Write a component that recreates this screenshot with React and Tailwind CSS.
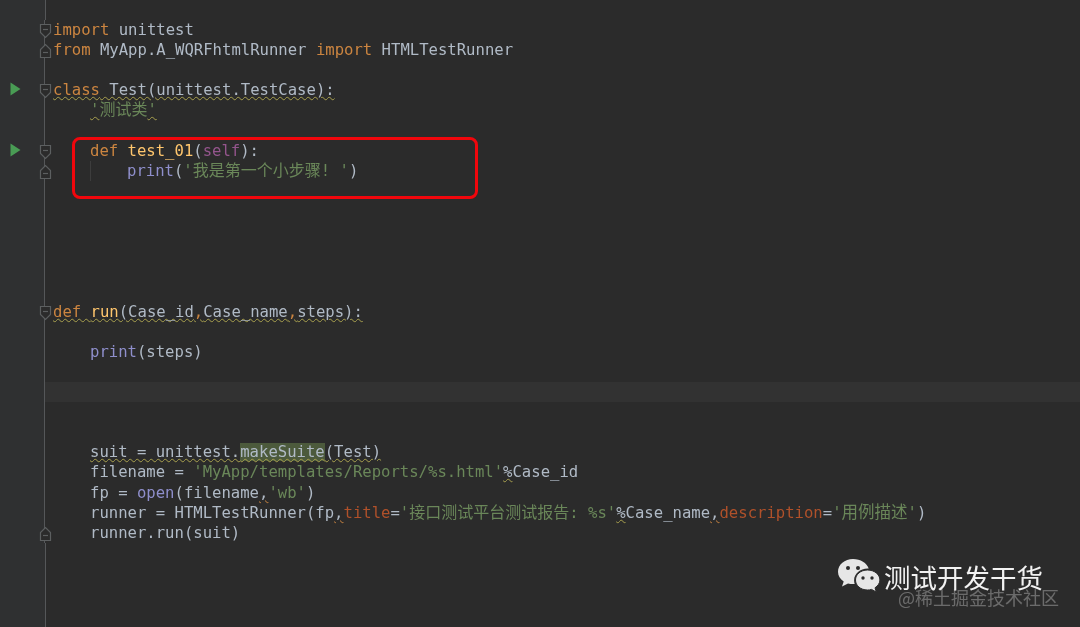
const kw = "text-[#cc8540]";
const fn = "text-[#ffc66d]";
const bi = "text-[#8f8fcc]";
const str = "text-[#6a8759]";
const arg = "text-[#b0512a]";
const wavy = "underline decoration-wavy decoration-[#a8a04e] decoration-1 underline-offset-1";
const warn = "underline decoration-wavy decoration-[#cc8540] decoration-1 underline-offset-1";

function FoldIcon({ up }) {
  return (
    <svg width="13" height="16" viewBox="0 0 13 16" fill="#2b2b2b" stroke="#5c5f60" strokeWidth="1.2" className="absolute left-[39px] top-[3px]">
      {up ? <path d="M1.500 14.500V6.500L6.500 1.500L11.500 6.500V14.500Z" /> : <path d="M1.500 1.500H11.500V9.500L6.500 14.500L1.500 9.500Z" />}
      <path d={up ? "M4 9.500H9" : "M4 6.500H9"} />
    </svg>
  );
}

function RunIcon() {
  return (
    <svg width="11" height="14" viewBox="0 0 11 14" className="absolute left-[10px] top-[2px]">
      <path d="M0.500 0.500L10.500 7L0.500 13.500Z" fill="#499c54" />
    </svg>
  );
}

// CJK runs are a touch wider than the mono size in the editor
function Cjk({ children }) {
  return <span className="text-[16px]">{children}</span>;
}

function Row({ children, run, fold, active, indent = "" }) {
  return (
    <div className={`flex h-[20.12px] ${active ? "bg-[#323232]" : ""}`}>
      <div className="relative w-[45px] shrink-0 border-r border-[#555759] bg-[#2f3031]">
        {run && <RunIcon />}
        {fold === "down" && <FoldIcon />}
        {fold === "up" && <FoldIcon up />}
      </div>
      <div className={`pl-2 whitespace-pre leading-[20px] ${indent}`}>{children}</div>
    </div>
  );
}

function Wechat() {
  return (
    <svg width="44" height="38" viewBox="0 0 44 38" fill="#e6e6e6">
      <path d="M16 1C7.700 1 1 6.700 1 13.700c0 4 2.200 7.500 5.700 9.800L5 28.400l6-3c1.600.5 3.300.7 5 .7.600 0 1.100 0 1.700-.1-.4-1.200-.6-2.400-.6-3.700 0-6.500 6-11.700 13.500-11.700h1.100C29.900 5 23.500 1 16 1Z" />
      <circle cx="11" cy="10" r="2" fill="#2b2b2b" />
      <circle cx="21" cy="10" r="2" fill="#2b2b2b" />
      <path d="M30.500 12C23.600 12 18.500 16.500 18.500 22s5.100 10 12 10c1.400 0 2.700-.2 4-.6l4.800 2.600-1.300-4.200c3-2 4.900-4.800 4.900-7.800 0-5.500-5.500-10-12.400-10Z" stroke="#2b2b2b" strokeWidth="1" />
      <circle cx="26" cy="20" r="1.700" fill="#2b2b2b" />
      <circle cx="35" cy="20" r="1.700" fill="#2b2b2b" />
    </svg>
  );
}

export default function App() {
  return (
    <div
      className="relative h-[627px] w-[1080px] overflow-hidden bg-[#2b2b2b] text-[15.6px] text-[#b0bac6] blur-[0.4px]"
      style={{ fontFamily: '"DejaVu Sans Mono", "Noto Sans CJK SC", monospace' }}
    >
      <div className="h-[20px] w-[46px] border-r border-[#555759] bg-[#2f3031]" />
      <Row fold="down"><span className={kw}>import</span> unittest</Row>
      <Row fold="up"><span className={kw}>from</span> MyApp.A_WQRFhtmlRunner <span className={kw}>import</span> HTMLTestRunner</Row>
      <Row />
      <Row run fold="down"><span className={wavy}><span className={kw}>class</span> Test(unittest.TestCase):</span></Row>
      <Row indent="pl-[45px]"><span className={str}><span className={wavy}>'</span><Cjk>测试类</Cjk><span className={wavy}>'</span></span></Row>
      <Row />
      <Row run fold="down" indent="pl-[45px]"><span className={kw}>def</span> <span className={fn}>test_01</span>(<span className="text-[#94558d]">self</span>):</Row>
      <Row fold="up" indent="pl-[45px]"><span className="inline-block border-l border-[#3d3d3d] pl-[36px]"><span className={bi}>print</span>(<span className={str}>'<Cjk>我是第一个小步骤</Cjk>! '</span>)</span></Row>
      <Row />
      <Row />
      <Row />
      <Row />
      <Row />
      <Row />
      <Row fold="down"><span className={wavy}><span className={kw}>def</span> <span className={fn}>run</span>(Case_id<span className={kw}>,</span>Case_name<span className={kw}>,</span>steps):</span></Row>
      <Row />
      <Row indent="pl-[45px]"><span className={bi}>print</span>(steps)</Row>
      <Row />
      <Row active />
      <Row />
      <Row />
      <Row indent="pl-[45px]"><span className={wavy}>suit = unittest.<span className="bg-[#4c5a3c]">makeSuite</span>(Test)</span></Row>
      <Row indent="pl-[45px]">filename = <span className={str}>'MyApp/templates/Reports/%s.html'</span><span className={wavy}>%</span>Case_id</Row>
      <Row indent="pl-[45px]">fp = <span className={bi}>open</span>(filename<span className={warn}>,</span><span className={str}>'wb'</span>)</Row>
      <Row indent="pl-[45px]">runner = HTMLTestRunner(fp<span className={warn}>,</span><span className={arg}>title</span>=<span className={str}>'<Cjk>接口测试平台测试报告</Cjk>: %s'</span><span className={wavy}>%</span>Case_name<span className={warn}>,</span><span className={arg}>description</span>=<span className={str}>'<span className="text-[16.500px]">用例描述</span>'</span>)</Row>
      <Row fold="up" indent="pl-[45px]">runner.run(suit)</Row>
      <div className="h-[85px] w-[46px] border-r border-[#555759] bg-[#2f3031]" />

      <div className="absolute left-[72px] top-[137px] h-[62px] w-[406px] rounded-lg border-[3px] border-[#f0060c]" />

      <div className="absolute left-[837px] top-[558px] flex items-center gap-[3px]">
        <Wechat />
        <span className="text-[26.500px] leading-none text-[#f2f2f2]" style={{ fontFamily: '"Noto Sans CJK SC", sans-serif' }}>测试开发干货</span>
      </div>
      <div className="absolute left-[898px] top-[585px] whitespace-nowrap text-[18px] leading-6 text-[#ffffff]/30" style={{ fontFamily: '"Noto Sans CJK SC", sans-serif' }}>@稀土掘金技术社区</div>
    </div>
  );
}
